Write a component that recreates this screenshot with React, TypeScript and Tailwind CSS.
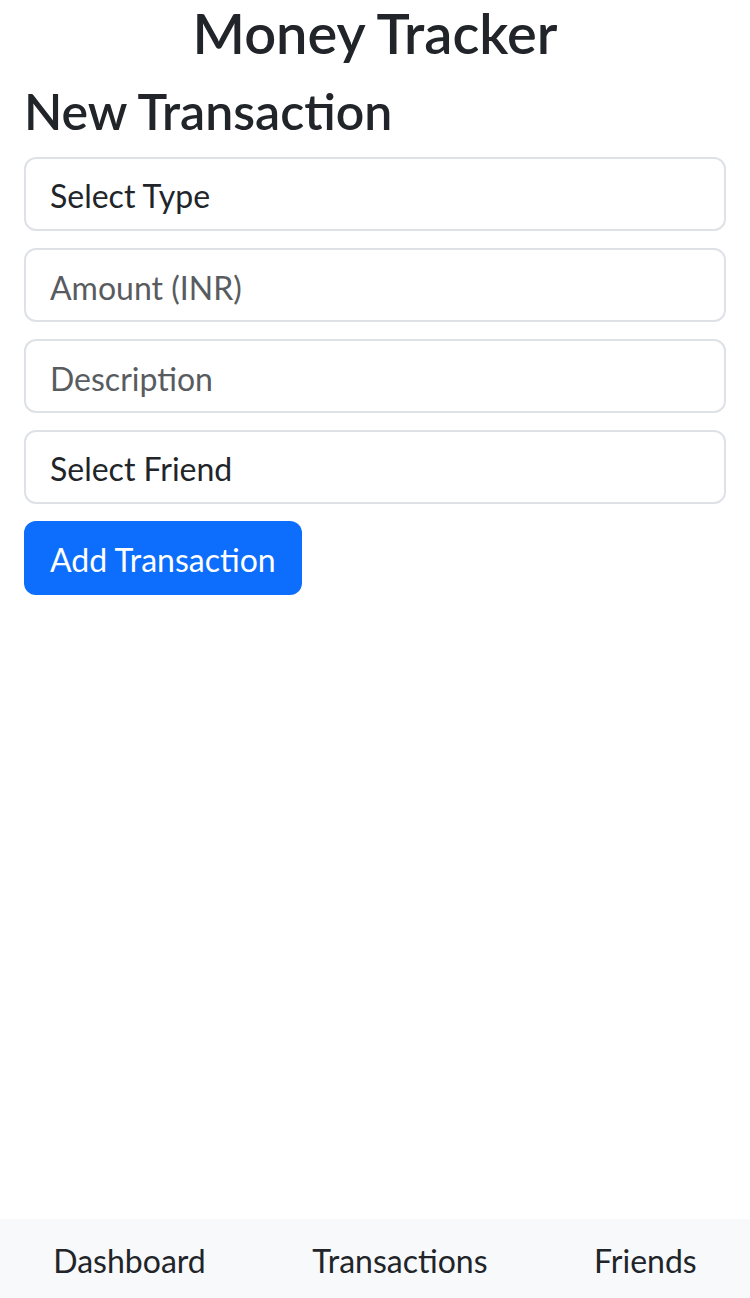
export default function App() {
  return (
    <div className="min-h-[1298px] flex flex-col bg-white text-[#212529] font-['Lato','Liberation_Sans',sans-serif]">
      <div className="flex-1 px-6">
        <h1 className="text-center text-[56px] leading-[66px] font-semibold mb-4">Money Tracker</h1>
        <h2 className="text-[50px] leading-[59px] font-semibold mb-4">New Transaction</h2>

        <form className="flex flex-col">
          <div className="h-[74px] mb-[17px] px-6 pt-1 flex items-center border-2 border-[#dee2e6] rounded-xl text-[32px]">
            Select Type
          </div>
          <input
            className="h-[74px] mb-[17px] px-6 pt-1 border-2 border-[#dee2e6] rounded-xl text-[32px] outline-none placeholder:text-[#595c5f]"
            placeholder="Amount (INR)"
          />
          <input
            className="h-[74px] mb-[17px] px-6 pt-1 border-2 border-[#dee2e6] rounded-xl text-[32px] outline-none placeholder:text-[#595c5f]"
            placeholder="Description"
          />
          <div className="h-[74px] mb-[17px] px-6 pt-1 flex items-center border-2 border-[#dee2e6] rounded-xl text-[32px]">
            Select Friend
          </div>
          <div>
            <button
              type="button"
              className="h-[74px] px-[26px] pt-1 rounded-xl bg-[#0d6efd] text-white text-[32px]"
            >
              Add Transaction
            </button>
          </div>
        </form>
      </div>

      <nav className="h-[79px] pt-1 bg-[#f8f9fa] flex items-center justify-around text-[32px]">
        <span>Dashboard</span>
        <span>Transactions</span>
        <span>Friends</span>
      </nav>
    </div>
  );
}
